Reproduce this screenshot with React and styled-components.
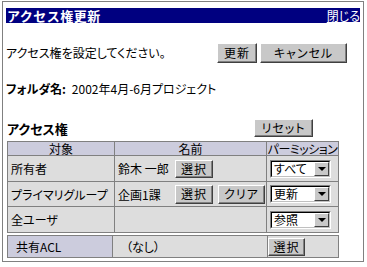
import React from "react";
import styled, { createGlobalStyle } from "styled-components";

const Global = createGlobalStyle`
  html, body { margin: 0; padding: 0; background: #ffffff; }
  body {
    font-family: "Noto Sans CJK JP", "Noto Sans", sans-serif;
    font-size: 12px;
    color: #000;
    font-feature-settings: "palt";
    -webkit-font-smoothing: none;
  }
`;

const Frame = styled.div`
  box-sizing: border-box;
  width: 362px;
  height: 261px;
  margin: 1px 0 0 2px;
  border: 1px solid #808080;
  padding: 6px 1px 0 3px;
`;

const TitleBar = styled.div`
  display: flex;
  align-items: center;
  justify-content: space-between;
  width: 354px;
  height: 15px;
  background: #000080;
  color: #fff;
  padding: 0 0 0 1px;
  box-sizing: border-box;
`;

const TitleText = styled.span`
  font-size: 13px;
  font-weight: bold;
  letter-spacing: 0.5px;
  line-height: 15px;
  font-feature-settings: normal;
`;

const CloseLink = styled.a`
  color: #fff;
  font-size: 12px;
  line-height: 14px;
  text-decoration: underline;
  cursor: pointer;
`;

const MessageRow = styled.div`
  display: flex;
  align-items: center;
  height: 20px;
  margin-top: 20px;
`;

const Message = styled.span`
  width: 211px;
  line-height: 20px;
`;

const ButtonGroup = styled.div`
  display: flex;
  gap: ${(p) => p.$gap || 3}px;
`;

const Button = styled.button`
  box-sizing: border-box;
  width: ${(p) => p.$w}px;
  height: ${(p) => p.$h || 20}px;
  padding: 0;
  font-family: inherit;
  font-size: 12px;
  font-feature-settings: "palt";
  letter-spacing: 1px;
  background: #c8c8c8;
  color: #000;
  border: 1px solid;
  border-color: #ffffff #404040 #404040 #ffffff;
  box-shadow: inset -1px -1px 0 #808080;
  line-height: 1;
`;

const FolderRow = styled.div`
  display: flex;
  align-items: center;
  height: 14px;
  margin-top: 18px;
  gap: 6px;
`;

const Label = styled.span`
  font-weight: bold;
  font-size: 12px;
`;

const HeadingRow = styled.div`
  display: flex;
  align-items: center;
  height: 18px;
  margin-top: 24px;
  padding-left: 1px;
  width: 306px;
  justify-content: space-between;
`;

const Heading = styled.span`
  font-weight: bold;
  font-size: 13px;
`;

const Table = styled.table`
  border-collapse: collapse;
  width: 331px;
  margin: ${(p) => p.$mt || 0}px 0 0 1px;
  table-layout: fixed;
`;

const HeadCell = styled.th`
  background: #ccccdd;
  border: 1px solid #808080;
  font-weight: normal;
  height: 13px;
  padding: 0;
  line-height: 13px;
  text-align: center;
  white-space: nowrap;
  overflow: hidden;
  letter-spacing: ${(p) => p.$ls || 0}px;
`;

const Cell = styled.td`
  background: ${(p) => (p.$accent ? "#ccccdd" : "#dddddd")};
  border: 1px solid #808080;
  height: ${(p) => p.$h || 24}px;
  padding: 0 0 0 ${(p) => (p.$pl ?? 3)}px;
  white-space: nowrap;
  vertical-align: middle;
`;

const NameBox = styled.div`
  display: flex;
  align-items: center;
`;

const NameLabel = styled.span`
  width: 57px;
`;

const SelectBox = styled.div`
  box-sizing: border-box;
  display: flex;
  align-items: center;
  width: 61px;
  height: 18px;
  border: 1px solid;
  border-color: #808080 #ffffff #ffffff #808080;
  background: #fff;
`;

const SelectInner = styled.div`
  box-sizing: border-box;
  display: flex;
  align-items: center;
  width: 100%;
  height: 100%;
  border: 1px solid;
  border-color: #000000 #c0c0c0 #c0c0c0 #000000;
  padding: 0 0 0 2px;
`;

const SelectValue = styled.span`
  flex: 1;
  line-height: 14px;
`;

const SelectArrow = styled.span`
  box-sizing: border-box;
  width: 15px;
  height: 14px;
  background: #c8c8c8;
  border: 1px solid;
  border-color: #ffffff #404040 #404040 #ffffff;
  display: flex;
  align-items: center;
  justify-content: center;
  &::after {
    content: "";
    border-left: 4px solid transparent;
    border-right: 4px solid transparent;
    border-top: 4px solid #000;
  }
`;

function Select({ value }) {
  return (
    <SelectBox>
      <SelectInner>
        <SelectValue>{value}</SelectValue>
        <SelectArrow />
      </SelectInner>
    </SelectBox>
  );
}

export default function App() {
  return (
    <>
      <Global />
      <Frame>
        <TitleBar>
          <TitleText>アクセス権更新</TitleText>
          <CloseLink>閉じる</CloseLink>
        </TitleBar>
        <MessageRow>
          <Message>アクセス権を設定してください。</Message>
          <ButtonGroup>
            <Button $w={40}>更新</Button>
            <Button $w={87}>キャンセル</Button>
          </ButtonGroup>
        </MessageRow>
        <FolderRow>
          <Label>フォルダ名:</Label>
          <span>2002年4月-6月プロジェクト</span>
        </FolderRow>
        <HeadingRow>
          <Heading>アクセス権</Heading>
          <Button $w={59} $h={18}>リセット</Button>
        </HeadingRow>
        <Table $mt={4}>
          <colgroup>
            <col style={{ width: 107 }} />
            <col style={{ width: 152 }} />
            <col style={{ width: 72 }} />
          </colgroup>
          <thead>
            <tr>
              <HeadCell>対象</HeadCell>
              <HeadCell>名前</HeadCell>
              <HeadCell $ls={-0.5}>パーミッション</HeadCell>
            </tr>
          </thead>
          <tbody>
            <tr>
              <Cell $h={25}>所有者</Cell>
              <Cell $h={25}>
                <NameBox>
                  <NameLabel>鈴木 一郎</NameLabel>
                  <Button $w={38} $h={18}>選択</Button>
                </NameBox>
              </Cell>
              <Cell $h={25}>
                <Select value="すべて" />
              </Cell>
            </tr>
            <tr>
              <Cell>プライマリグループ</Cell>
              <Cell>
                <NameBox>
                  <NameLabel>企画1課</NameLabel>
                  <ButtonGroup $gap={5}>
                    <Button $w={38} $h={19}>選択</Button>
                    <Button $w={47} $h={19}>クリア</Button>
                  </ButtonGroup>
                </NameBox>
              </Cell>
              <Cell>
                <Select value="更新" />
              </Cell>
            </tr>
            <tr>
              <Cell $h={25}>全ユーザ</Cell>
              <Cell $h={25} />
              <Cell $h={25}>
                <Select value="参照" />
              </Cell>
            </tr>
          </tbody>
        </Table>
        <Table $mt={2}>
          <colgroup>
            <col style={{ width: 105 }} />
            <col style={{ width: 155 }} />
            <col style={{ width: 71 }} />
          </colgroup>
          <tbody>
            <tr>
              <Cell $accent $h={21} $pl={8}>共有ACL</Cell>
              <Cell $h={21} $pl={13}>（なし）</Cell>
              <Cell $h={21} $pl={0}>
                <Button $w={37} $h={18}>選択</Button>
              </Cell>
            </tr>
          </tbody>
        </Table>
      </Frame>
    </>
  );
}
